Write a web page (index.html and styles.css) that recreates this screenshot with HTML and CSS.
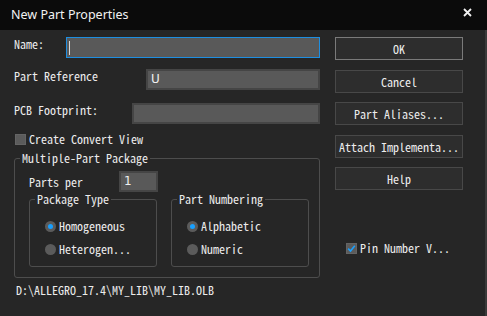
FILE: index.html
```html
<!DOCTYPE html>
<html lang="en">
<head>
    <meta charset="UTF-8">
    <title>New Part Properties</title>
    <link rel="stylesheet" href="styles.css">
</head>
<body>
    <div class="dialog">
        <div class="titlebar">
            <span class="title">New Part Properties</span>
            <svg class="close" width="9" height="9" viewBox="0 0 9 9">
                <path d="M1 1 L8 8 M8 1 L1 8" stroke="#f2f2f2" stroke-width="1.8"/>
            </svg>
        </div>
        <div class="content">
            <div class="left">
                <div class="row">
                    <span class="label">Name:</span>
                    <div class="input name focused"><span class="caret"></span></div>
                </div>
                <div class="row">
                    <span class="label">Part Reference</span>
                    <div class="input ref">U</div>
                </div>
                <div class="row">
                    <span class="label">PCB Footprint:</span>
                    <div class="input pcb"></div>
                </div>
                <div class="check-row convert">
                    <span class="box"></span>
                    <span>Create Convert View</span>
                </div>
                <fieldset class="group outer">
                    <legend>Multiple-Part Package</legend>
                    <div class="parts-row">
                        <span class="label">Parts per</span>
                        <div class="input parts">1</div>
                    </div>
                    <div class="subgroups">
                        <fieldset class="group inner pkg">
                            <legend>Package Type</legend>
                            <div class="radio-row"><span class="radio on"></span>Homogeneous</div>
                            <div class="radio-row"><span class="radio"></span>Heterogen...</div>
                        </fieldset>
                        <fieldset class="group inner num">
                            <legend>Part Numbering</legend>
                            <div class="radio-row"><span class="radio on"></span>Alphabetic</div>
                            <div class="radio-row"><span class="radio"></span>Numeric</div>
                        </fieldset>
                    </div>
                </fieldset>
                <div class="path">D:\ALLEGRO_17.4\MY_LIB\MY_LIB.OLB</div>
            </div>
            <div class="right">
                <button class="btn default">OK</button>
                <button class="btn">Cancel</button>
                <button class="btn">Part Aliases...</button>
                <button class="btn">Attach Implementa...</button>
                <button class="btn">Help</button>
                <div class="check-row pin">
                    <span class="box checked">
                        <svg width="11" height="11" viewBox="0 0 11 11">
                            <path d="M2.2 5.6 L4.5 8 L8.8 2.8" fill="none" stroke="#1aa0ff" stroke-width="1.6"/>
                        </svg>
                    </span>
                    <span>Pin Number V...</span>
                </div>
            </div>
        </div>
    </div>
</body>
</html>
```

FILE: styles.css
```css
* {
    box-sizing: border-box;
}

body {
    margin: 0;
    background: #262626;
    font-family: "Noto Sans Mono CJK SC", "Noto Sans CJK SC", monospace;
    font-size: 12px;
    color: #ececec;
}

.dialog {
    width: 487px;
    height: 316px;
    display: flex;
    flex-direction: column;
}

.titlebar {
    height: 30px;
    background: #0b0b0b;
    display: flex;
    align-items: center;
    justify-content: space-between;
    padding: 0 15px 2px 11px;
}

.title {
    font-family: "Noto Sans", sans-serif;
    font-size: 12.5px;
    color: #f2f2f2;
}

.close {
    margin-top: -4px;
}

.content {
    flex: 1;
    display: flex;
    border-right: 2px solid #3a3a3a;
}

.left {
    width: 306px;
    margin-left: 14px;
    padding-top: 7px;
    display: flex;
    flex-direction: column;
}

.row {
    display: flex;
    justify-content: space-between;
    align-items: flex-start;
    height: 21px;
    margin-bottom: 11px;
}

.row:nth-child(2) {
    margin-bottom: 13px;
}

.row:nth-child(3) {
    margin-bottom: 8px;
}

.label {
    line-height: 14px;
    white-space: nowrap;
}

.input {
    height: 21px;
    background: #595959;
    border: 2px solid #454545;
    line-height: 17px;
    padding-left: 3px;
    font-family: "DejaVu Sans", sans-serif;
    font-size: 12px;
    color: #f0f0f0;
}

.input.focused {
    border: 1px solid #1e8ee0;
}

.input.name {
    width: 254px;
    padding-left: 2px;
    padding-top: 3px;
}

.caret {
    display: block;
    width: 1px;
    height: 14px;
    background: #d8d8d8;
}

.input.ref {
    width: 174px;
}

.input.pcb {
    width: 188px;
}

.check-row {
    display: flex;
    align-items: center;
    height: 14px;
    line-height: 14px;
    white-space: nowrap;
}

.check-row .box {
    width: 11px;
    height: 11px;
    background: #5b5b5b;
    border: 1px solid #646464;
    margin-right: 3px;
    flex-shrink: 0;
    display: flex;
}

.check-row .box svg {
    margin: -1px;
}

.convert {
    margin-left: 1px;
}

.group {
    margin: 0;
    min-width: 0;
    border: 1px solid #4d4d4d;
    border-radius: 3px;
}

.group legend {
    padding: 0 2px;
    line-height: 12px;
    white-space: nowrap;
}

.outer {
    margin-top: 6px;
    padding: 7px 10px 10px 14px;
}

.outer > legend {
    margin-left: -9px;
}

.parts-row {
    display: flex;
    align-items: center;
    height: 21px;
    margin-bottom: 1px;
}

.parts-row .label {
    width: 90px;
}

.input.parts {
    width: 39px;
}

.subgroups {
    display: flex;
    gap: 14px;
}

.inner {
    padding: 14px 0 10px 15px;
}

.inner > legend {
    margin-left: -10px;
}

.pkg {
    width: 128px;
}

.num {
    width: 138px;
}

.radio-row {
    display: flex;
    align-items: center;
    height: 14px;
    line-height: 14px;
    white-space: nowrap;
}

.radio-row + .radio-row {
    margin-top: 9px;
}

.radio {
    width: 11px;
    height: 11px;
    border-radius: 50%;
    background: #5b5b5b;
    margin-right: 3px;
    display: flex;
    align-items: center;
    justify-content: center;
}

.radio.on::after {
    content: "";
    width: 5px;
    height: 5px;
    border-radius: 50%;
    background: #18a0ff;
}

.path {
    margin-top: 5px;
    margin-left: 2px;
    line-height: 14px;
}

.right {
    width: 128px;
    margin-left: 15px;
    padding-top: 7px;
    display: flex;
    flex-direction: column;
    gap: 9.5px;
}

.btn {
    height: 23px;
    background: #2d2d2d;
    border: 1px solid #484848;
    color: #ececec;
    font-family: inherit;
    font-size: 12px;
    padding: 0;
    white-space: nowrap;
}

.btn.default {
    border-color: #7a7a7a;
}

.pin {
    margin-top: 41.5px;
    margin-left: 11px;
}
```
